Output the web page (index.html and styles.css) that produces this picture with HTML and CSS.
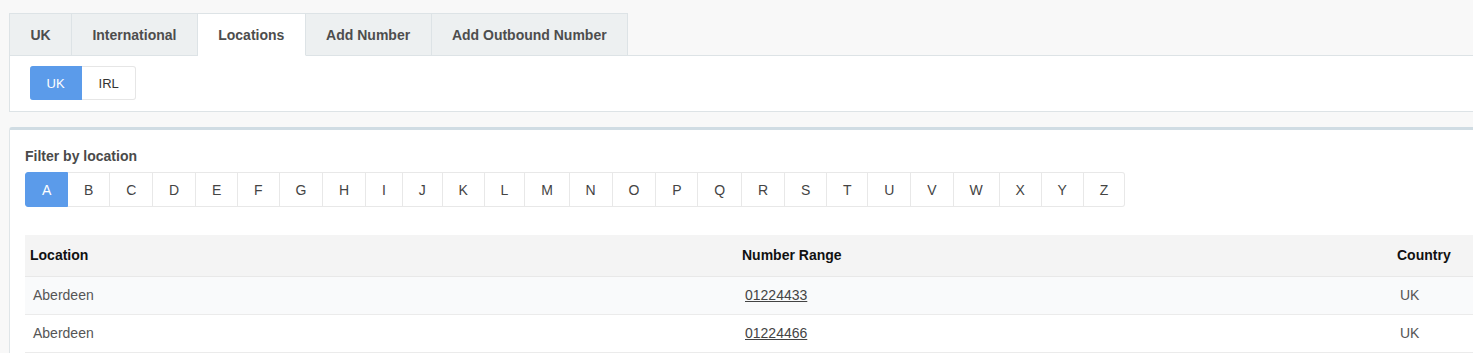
FILE: index.html
```html
<!DOCTYPE html>
<html lang="en">
<head>
    <meta charset="UTF-8">
    <meta name="viewport" content="width=device-width, initial-scale=1.0">
    <title>Numbers - Locations</title>
    <link rel="stylesheet" href="styles.css">
</head>
<body>
    <div class="page">
        <div class="tabs-box">
            <ul class="tabs">
                <li class="tab">UK</li>
                <li class="tab">International</li>
                <li class="tab active">Locations</li>
                <li class="tab">Add Number</li>
                <li class="tab">Add Outbound Number</li>
            </ul>
            <div class="tab-pane">
                <div class="pill-group">
                    <button class="pill active">UK</button>
                    <button class="pill">IRL</button>
                </div>
            </div>
        </div>

        <div class="card">
            <div class="filter-label">Filter by location</div>
            <div class="letters">
                <button class="letter active">A</button>
                <button class="letter">B</button>
                <button class="letter">C</button>
                <button class="letter">D</button>
                <button class="letter">E</button>
                <button class="letter">F</button>
                <button class="letter">G</button>
                <button class="letter">H</button>
                <button class="letter">I</button>
                <button class="letter">J</button>
                <button class="letter">K</button>
                <button class="letter">L</button>
                <button class="letter">M</button>
                <button class="letter">N</button>
                <button class="letter">O</button>
                <button class="letter">P</button>
                <button class="letter">Q</button>
                <button class="letter">R</button>
                <button class="letter">S</button>
                <button class="letter">T</button>
                <button class="letter">U</button>
                <button class="letter">V</button>
                <button class="letter">W</button>
                <button class="letter">X</button>
                <button class="letter">Y</button>
                <button class="letter">Z</button>
            </div>

            <table class="locations">
                <colgroup>
                    <col class="col-location">
                    <col class="col-range">
                    <col>
                </colgroup>
                <thead>
                    <tr>
                        <th>Location</th>
                        <th>Number Range</th>
                        <th>Country</th>
                    </tr>
                </thead>
                <tbody>
                    <tr>
                        <td>Aberdeen</td>
                        <td><a href="#">01224433</a></td>
                        <td>UK</td>
                    </tr>
                    <tr>
                        <td>Aberdeen</td>
                        <td><a href="#">01224466</a></td>
                        <td>UK</td>
                    </tr>
                </tbody>
            </table>
        </div>
    </div>
</body>
</html>
```

FILE: styles.css
```css
:root {
    --page-bg: #f8f8f8;
    --tab-bg: #edf0f1;
    --line: #dde3e6;
    --blue: #5b9bea;
    --text: #4a4a4a;
}

* {
    box-sizing: border-box;
}

body {
    margin: 0;
    background: var(--page-bg);
    font-family: "Liberation Sans", Arial, Helvetica, sans-serif;
    font-size: 14px;
    color: var(--text);
    overflow: hidden;
}

.page {
    width: 1500px;
    padding: 13px 0 0 9px;
}

/* Tabs */
.tabs {
    list-style: none;
    margin: 0;
    padding: 0;
    display: flex;
    border-bottom: 1px solid var(--line);
}

.tab {
    height: 43px;
    margin-bottom: -1px;
    padding: 1px 20.4px 0;
    display: flex;
    align-items: center;
    background: var(--tab-bg);
    border: 1px solid var(--line);
    border-left: none;
    font-weight: 700;
    color: #4d4d4d;
}

.tab:first-child {
    border-left: 1px solid var(--line);
}

.tab.active {
    background: #fff;
    border-bottom-color: #fff;
}

.tab-pane {
    background: #fff;
    border-left: 1px solid var(--line);
    border-bottom: 1px solid var(--line);
    padding: 10px 20px 11px;
}

.pill-group {
    display: flex;
}

.pill {
    height: 34px;
    padding: 0 16.5px;
    font-family: inherit;
    font-size: 13px;
    color: #333;
    background: #fff;
    border: 1px solid #e6e6e6;
    border-left: none;
}

.pill:first-child {
    border-radius: 3px 0 0 3px;
}

.pill:last-child {
    border-radius: 0 3px 3px 0;
}

.pill.active {
    background: var(--blue);
    border-color: var(--blue);
    color: #fff;
}

/* Filter card */
.card {
    margin-top: 15px;
    background: #fff;
    border-top: 3px solid #d0dce3;
    border-left: 1px solid #dfe5e8;
    border-top-left-radius: 3px;
    padding: 16px 0 0 15px;
}

.filter-label {
    font-weight: 700;
    line-height: 20px;
    color: #4a4a4a;
    margin-bottom: 6px;
}

.letters {
    display: flex;
}

.letter {
    height: 35px;
    padding: 0 15.9px;
    font-family: inherit;
    font-size: 14px;
    color: #444;
    background: #fff;
    border: 1px solid #e8e8e8;
    border-left: none;
}

.letter:first-child {
    border-left: 1px solid #e8e8e8;
    border-radius: 3px 0 0 3px;
}

.letter:last-child {
    border-radius: 0 3px 3px 0;
}

.letter.active {
    background: var(--blue);
    border-color: var(--blue);
    color: #fff;
}

/* Table */
.locations {
    margin-top: 28px;
    width: 1475px;
    border-collapse: collapse;
    table-layout: fixed;
}

.col-location {
    width: 712px;
}

.col-range {
    width: 655px;
}

.locations th {
    height: 41px;
    padding: 0 5px;
    text-align: left;
    font-weight: 700;
    color: #111;
    background: #f4f4f4;
    border-bottom: 1px solid #e8e8e8;
}

.locations td {
    height: 38px;
    padding: 0 8px;
    color: #555;
    border-bottom: 1px solid #ebebeb;
}

.locations tbody tr:nth-child(odd) td {
    background: #f9fafb;
}

.locations a {
    color: #444;
    text-decoration: underline;
}
```
